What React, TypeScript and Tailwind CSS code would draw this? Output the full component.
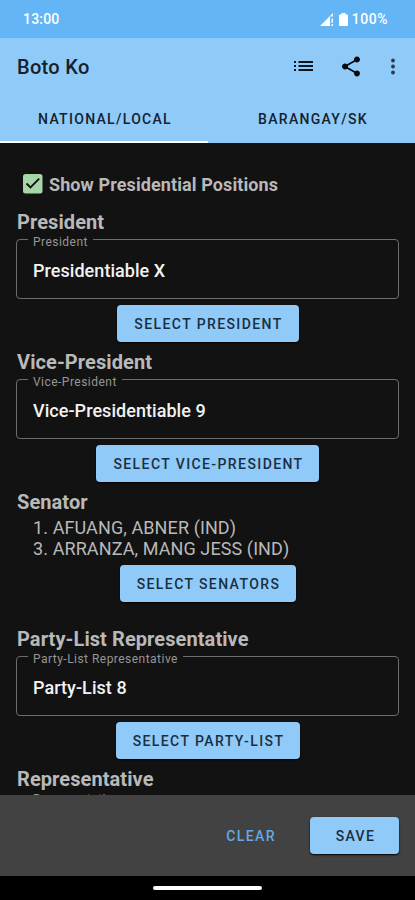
import React from "react";

function Button({ children, className }: { children: React.ReactNode; className: string }) {
  return (
    <button
      className={`flex h-[37px] shrink-0 items-center justify-center rounded-[4px] bg-[#90caf9] pt-px pl-[2px] text-[14px] font-medium tracking-[1.4px] whitespace-nowrap text-[#1a2f40] shadow-[0_1px_2px_#000] ${className}`}
    >
      {children}
    </button>
  );
}

function Heading({ children }: { children: React.ReactNode }) {
  return (
    <h2 className="h-[24px] pl-px text-[20px] leading-[24px] font-bold tracking-[0.08px] whitespace-nowrap text-[#b9b9b9]">
      {children}
    </h2>
  );
}

function Field({ label, value }: { label: string; value: string }) {
  return (
    <div className="relative mt-[5px] flex h-[60px] items-center rounded-[4px] border border-[#6c6c6c] pt-[3px] pl-[16px]">
      <span className="absolute -top-[5px] left-[11px] bg-[#121212] px-[5px] text-[12px] leading-[14px] tracking-[0.47px] whitespace-nowrap text-[#969696]">
        {label}
      </span>
      <span className="text-[18px] leading-[24px] font-medium tracking-[0.05px] whitespace-nowrap text-[#f2f2f2]">{value}</span>
    </div>
  );
}

export default function App() {
  return (
    <div className="flex h-[900px] w-[415px] flex-col overflow-hidden bg-[#121212] font-['Roboto',sans-serif]">
      <div className="flex h-[38px] shrink-0 items-center justify-between bg-[#64b5f6] pt-px pr-[27px] pl-[23px] text-[14px] font-medium text-white">
        <span className="tracking-[0.2px]">13:00</span>
        <div className="flex items-center">
          <svg width="14" height="13" viewBox="0 0 14 13" fill="white">
            <path d="M0 13 13 0v3.500h-3V13z" />
            <path d="M11.500 5.500H13v4.300h-1.500zM11.500 11H13v2h-1.500z" />
          </svg>
          <svg className="ml-[5px]" width="9" height="13" viewBox="0 0 9 14" preserveAspectRatio="none" fill="white">
            <path d="M2.500 0h4v1.500H8q1 0 1 1V13q0 1-1 1H1q-1 0-1-1V2.500q0-1 1-1h1.500z" />
          </svg>
          <span className="ml-[4px] tracking-[0.5px]">100%</span>
        </div>
      </div>

      <header className="h-[105px] shrink-0 bg-[#90caf9] text-[#14222d]">
        <div className="flex h-[57px] items-center pl-[17px]">
          <h1 className="flex-1 pt-px text-[20px] font-medium tracking-[0.3px]">Boto Ko</h1>
          <svg className="mr-[26px]" width="19" height="12" viewBox="0 0 19 12" fill="#0b151d">
            <path d="M0 0h2v2H0zM4.500 0H19v2H4.500zM0 4h2v2H0zM4.500 4H19v2H4.500zM0 8h2v2H0zM4.500 8H19v2H4.500z" />
          </svg>
          <svg className="mr-[20px]" width="24" height="24" viewBox="0 0.500 24 24" fill="#050a0e">
            <path d="M18 16.080c-.76 0-1.440.3-1.960.77L8.910 12.700c.05-.23.09-.46.09-.7s-.04-.47-.09-.7l7.050-4.110c.54.5 1.250.81 2.040.81 1.660 0 3-1.340 3-3s-1.340-3-3-3-3 1.340-3 3c0 .24.04.47.09.7L8.040 9.810C7.500 9.310 6.790 9 6 9c-1.660 0-3 1.340-3 3s1.340 3 3 3c.79 0 1.500-.31 2.040-.81l7.120 4.160c-.05.21-.08.43-.08.65 0 1.610 1.310 2.920 2.920 2.920s2.920-1.310 2.920-2.920-1.310-2.920-2.920-2.920z" />
          </svg>
          <svg className="mr-[12px]" width="20" height="24" viewBox="0 0.500 20 24" fill="#2a3b49">
            <circle cx="10" cy="6" r="1.900" />
            <circle cx="10" cy="12" r="1.900" />
            <circle cx="10" cy="18" r="1.900" />
          </svg>
        </div>
        <div className="flex h-[48px] text-[14px] font-medium tracking-[1.300px]">
          <div className="flex w-[208px] items-center justify-center border-b-2 border-white pt-[3px] pl-[2px]">NATIONAL/LOCAL</div>
          <div className="flex flex-1 items-center justify-center border-b-2 border-[#90caf9] pt-[3px] pl-[3px]">BARANGAY/SK</div>
        </div>
      </header>

      <main className="flex min-h-0 flex-1 flex-col overflow-hidden px-[16px]">
        <label className="mt-[29px] mb-[14px] flex h-[24px] shrink-0 items-center pl-[7px] text-[18px] font-bold tracking-[0.1px] text-[#b9b9b9]">
          <svg className="mr-[6px]" width="20" height="20" viewBox="0 0 20 20">
            <rect y="0" width="19.500" height="19.500" rx="2.500" fill="#a5d6a7" />
            <path d="m3.500 9.500 4 4 8.700-8.900" fill="none" stroke="#121212" strokeWidth="1.900" />
          </svg>
          Show Presidential Positions
        </label>

        <section className="flex h-[140px] shrink-0 flex-col">
          <Heading>President</Heading>
          <Field label="President" value="Presidentiable X" />
          <Button className="mt-[6px] w-[182px] self-center">SELECT PRESIDENT</Button>
        </section>

        <section className="flex h-[140px] shrink-0 flex-col">
          <Heading>Vice-President</Heading>
          <Field label="Vice-President" value="Vice-Presidentiable 9" />
          <Button className="mt-[6px] w-[223px] self-center">SELECT VICE-PRESIDENT</Button>
        </section>

        <section className="flex h-[137px] shrink-0 flex-col">
          <Heading>Senator</Heading>
          <div className="mt-[3px] pl-[17px] text-[18px] leading-[21px] tracking-[0.1px] whitespace-nowrap text-[#b9b9b9]">
            <p>1. AFUANG, ABNER (IND)</p>
            <p>3. ARRANZA, MANG JESS (IND)</p>
          </div>
          <Button className="mt-[6px] w-[176px] self-center">SELECT SENATORS</Button>
        </section>

        <section className="flex h-[140px] shrink-0 flex-col">
          <Heading>Party-List Representative</Heading>
          <Field label="Party-List Representative" value="Party-List 8" />
          <Button className="mt-[6px] w-[184px] self-center">SELECT PARTY-LIST</Button>
        </section>

        <section className="flex h-[140px] shrink-0 flex-col">
          <Heading>Representative</Heading>
          <Field label="Representative" value="" />
        </section>
      </main>

      <footer className="flex h-[81px] shrink-0 items-center justify-end bg-[#424242] pr-[16px]">
        <button className="mr-[34px] pt-[2px] text-[14px] font-medium tracking-[1.400px] text-[#64a9e6]">CLEAR</button>
        <Button className="w-[89px]">SAVE</Button>
      </footer>
      <div className="flex h-[24px] shrink-0 items-center justify-center bg-black">
        <div className="h-[4px] w-[109px] rounded-[2px] bg-white" />
      </div>
    </div>
  );
}
